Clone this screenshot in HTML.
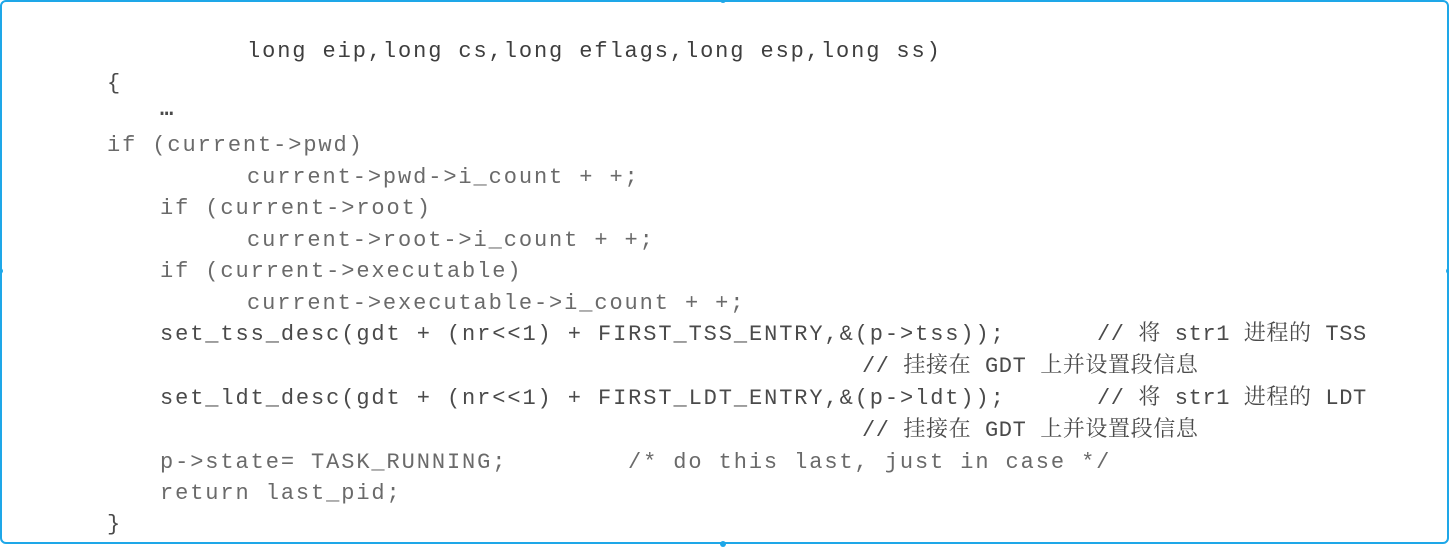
<!DOCTYPE html>
<html><head><meta charset="utf-8"><style>
html,body{margin:0;padding:0;background:#fff;}
body{width:1449px;height:544px;position:relative;overflow:hidden;}
.frame{position:absolute;left:0;top:0;width:1445px;height:540px;border:2px solid #1ea7e8;border-radius:6px;}
.dot{position:absolute;width:6px;height:6px;border-radius:3px;background:#1ea7e8;}
.l{position:absolute;font-family:"Liberation Mono","Noto Serif CJK SC",monospace;font-size:22px;letter-spacing:1.9px;white-space:pre;color:#4a4a4a;line-height:26px;}
.g{color:#6a6a6a;}
.c{letter-spacing:0.6px;}
</style></head><body>
<div class="frame"></div>
<div class="dot" style="left:720px;top:-3px"></div>
<div class="dot" style="left:720px;top:541px"></div>
<div class="dot" style="left:-3px;top:268px"></div>
<div class="dot" style="left:1446px;top:268px"></div>

<div class="l" style="left:247px;top:39px;color:#3e3e3e">long eip,long cs,long eflags,long esp,long ss)</div>
<div class="l" style="left:107px;top:71px">{</div>
<div class="l" style="left:160px;top:97px;font-weight:bold">…</div>
<div class="l g" style="left:107px;top:133px">if (current-&gt;pwd)</div>
<div class="l g" style="left:247px;top:165px">current-&gt;pwd-&gt;i_count + +;</div>
<div class="l g" style="left:160px;top:196px">if (current-&gt;root)</div>
<div class="l g" style="left:247px;top:228px">current-&gt;root-&gt;i_count + +;</div>
<div class="l g" style="left:160px;top:259px">if (current-&gt;executable)</div>
<div class="l g" style="left:247px;top:291px">current-&gt;executable-&gt;i_count + +;</div>
<div class="l" style="left:160px;top:322px">set_tss_desc(gdt + (nr&lt;&lt;1) + FIRST_TSS_ENTRY,&amp;(p-&gt;tss));</div>
<div class="l c" style="left:1097px;top:322px">// 将 str1 进程的 TSS</div>
<div class="l c" style="left:862px;top:354px">// 挂接在 GDT 上并设置段信息</div>
<div class="l" style="left:160px;top:386px">set_ldt_desc(gdt + (nr&lt;&lt;1) + FIRST_LDT_ENTRY,&amp;(p-&gt;ldt));</div>
<div class="l c" style="left:1097px;top:386px">// 将 str1 进程的 LDT</div>
<div class="l c" style="left:862px;top:418px">// 挂接在 GDT 上并设置段信息</div>
<div class="l g" style="left:160px;top:450px">p-&gt;state= TASK_RUNNING;</div>
<div class="l g" style="left:628px;top:450px">/* do this last, just in case */</div>
<div class="l g" style="left:160px;top:481px">return last_pid;</div>
<div class="l" style="left:107px;top:512px">}</div>
</body></html>
